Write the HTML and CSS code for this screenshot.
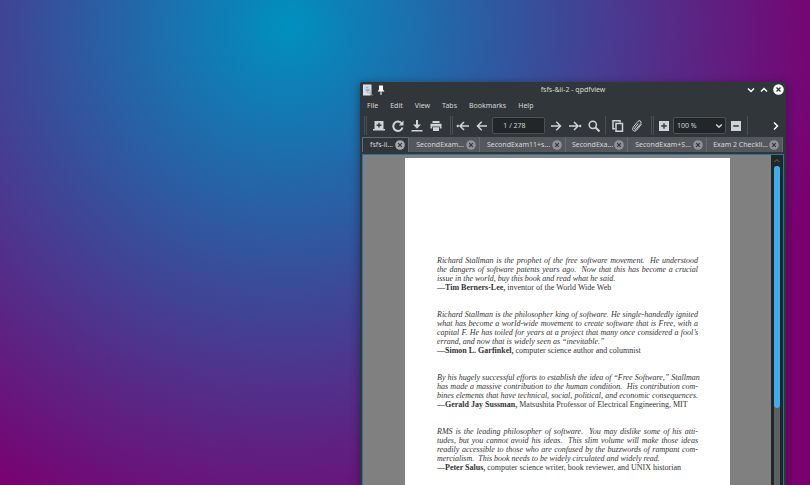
FILE: index.html
```html
<!DOCTYPE html>
<html lang="en">
<head>
<meta charset="utf-8">
<title>fsfs-&amp;ii-2 - qpdfview</title>
<link rel="stylesheet" href="styles.css">
</head>
<body>
<svg class="defs" aria-hidden="true">
  <symbol id="close" viewBox="0 0 10 10"><circle cx="5" cy="5" r="4.8" fill="currentColor"/><path class="cross" d="M3.2 3.2l3.6 3.6M6.8 3.2L3.2 6.8"/></symbol>
</svg>
<main class="window">
  <header class="titlebar">
    <div class="title-left">
      <svg width="11" height="12" viewBox="0 0 11 12"><path d="M1 .5h8.500v9l-1 2H1z" fill="#dfe3e6"/><path d="M2.500 2h5.500v6.500H2.500z" fill="#c3d4e4"/><path d="M4 3h2v1H4zM4 5h3v2H4z" fill="#8fb2d4"/><circle cx="7" cy="7.500" r="1.800" fill="none" stroke="#a5adb3" stroke-width=".8"/><path d="M8.500 9l2 2.500" stroke="#8a9298" stroke-width="1.200"/></svg>
      <svg width="8" height="10" viewBox="0 0 8 10"><path d="M2 .5h4v4l1.500 2h-7l1.500-2z" fill="#fcfcfc"/><path d="M4 6v4" stroke="#fcfcfc"/></svg>
    </div>
    <h1>fsfs-&amp;ii-2 - qpdfview</h1>
    <div class="title-right">
      <button aria-label="Minimize"><svg width="8" height="8" viewBox="0 0 8 8"><path class="line" d="M1 2.500l3 3 3-3"/></svg></button>
      <button aria-label="Maximize"><svg width="8" height="8" viewBox="0 0 8 8"><path class="line" d="M1 5.500l3-3 3 3"/></svg></button>
      <button class="win-close" aria-label="Close"><svg width="11" height="11"><use href="#close"/></svg></button>
    </div>
  </header>
  <nav class="menu">
    <button>File</button><button>Edit</button><button>View</button><button>Tabs</button><button>Bookmarks</button><button>Help</button>
  </nav>
  <div class="toolbar" role="toolbar" aria-label="Main">
    <span class="handle"></span>
    <div class="group">
      <button aria-label="Open"><svg width="12" height="12" viewBox="0 0 12 12"><path fill-rule="evenodd" fill="currentColor" d="M1.500 1h9v8h-9zM5.300 2.800v1.700H3.600v1.400h1.700v1.700h1.400V5.900h1.700V4.500H6.700V2.800z"/><path d="M0 9h12v1.500H0z" fill="currentColor"/></svg></button>
      <button aria-label="Refresh"><svg width="12" height="12" viewBox="0 0 12 12"><path class="line thick" d="M9.800 3.500A4.700 4.700 0 1 0 10.500 7.500"/><path d="M11.500.5v5H6.800z" fill="currentColor"/></svg></button>
      <button aria-label="Save"><svg width="12" height="12" viewBox="0 0 12 12"><path d="M5 0h2v4.500h3L6 8.700 2 4.500h3zM.5 10h11v1.500H.5z" fill="currentColor"/></svg></button>
      <button aria-label="Print"><svg width="12" height="12" viewBox="0 0 12 12"><path d="M2.500 1h7v2h-7zM.5 3.800h11v4.700H9.800v-2H2.200v2H.5zM3 7.300h6v3.700H3z" fill="currentColor"/></svg></button>
    </div>
    <span class="handle"></span>
    <div class="group">
      <button aria-label="First page"><svg width="14" height="12" viewBox="0 0 14 12"><path class="line" d="M4 6h9M8 2L4 6l4 4"/><circle cx="1.800" cy="6" r="1.200" fill="currentColor"/></svg></button>
      <button aria-label="Previous page"><svg width="12" height="12" viewBox="0 0 12 12"><path class="line" d="M1.500 6h9.500M5.700 1.800L1.500 6l4.200 4.200"/></svg></button>
    </div>
    <input class="page-no" type="text" value="1 / 278" aria-label="Page">
    <div class="group">
      <button aria-label="Next page"><svg width="12" height="12" viewBox="0 0 12 12"><path class="line" d="M10.500 6H1M6.300 1.800L10.500 6l-4.200 4.200"/></svg></button>
      <button aria-label="Last page"><svg width="14" height="12" viewBox="0 0 14 12"><path class="line" d="M10 6H1M6 2l4 4-4 4"/><circle cx="12.200" cy="6" r="1.200" fill="currentColor"/></svg></button>
      <button aria-label="Search"><svg width="12" height="12" viewBox="0 0 12 12"><circle class="line" cx="4.800" cy="4.800" r="3.600"/><path class="line thick" d="M7.500 7.500l4 4"/></svg></button>
    </div>
    <span class="sep"></span>
    <div class="group">
      <button aria-label="Copy"><svg width="12" height="12" viewBox="0 0 12 12"><path class="line" d="M4 3.500h6.500v7.700H4zM3 8.800H1V.8h7v1.700"/></svg></button>
      <button aria-label="Attach"><svg width="12" height="12" viewBox="0 0 12 12"><path class="line thin" d="M7.300 3.500L3.800 8q-.5 1.200.5 1.500.7 0 1.200-.7l4.300-5.300q.8-1.700-.5-2.600-1.300-.7-2.500.6L2.200 7.200q-1.300 2.200.1 3.500 1.700 1.200 3.400-.6l4.800-6"/></svg></button>
    </div>
    <span class="handle"></span>
    <div class="group zoom">
      <button aria-label="Zoom in"><svg width="10" height="10" viewBox="0 0 10 10"><path fill="currentColor" fill-rule="evenodd" d="M0 0h10v10H0zM4.300 2.200v2.100H2.200v1.400h2.100v2.100h1.400V5.700h2.100V4.300H5.700V2.200z"/></svg></button>
      <div class="select">
        <select aria-label="Zoom"><option>100 %</option></select>
        <svg width="8" height="8" viewBox="0 0 8 8"><path class="line" d="M1.200 2.500L4 5.300l2.800-2.800"/></svg>
      </div>
      <button aria-label="Zoom out"><svg width="10" height="10" viewBox="0 0 10 10"><path fill="currentColor" fill-rule="evenodd" d="M0 0h10v10H0zM2.200 4.300v1.400h5.600V4.300z"/></svg></button>
    </div>
    <span class="sep"></span>
    <button class="more" aria-label="More tools"><svg width="8" height="10" viewBox="0 0 8 10"><path class="line bright" d="M2 1.500L5.500 5 2 8.500"/></svg></button>
  </div>
  <div class="tabs">
    <div class="tab active"><button class="label">fsfs-ii...</button><button class="x" aria-label="Close tab"><svg width="10" height="10"><use href="#close"/></svg></button></div>
    <div class="tab"><button class="label">SecondExam...</button><button class="x" aria-label="Close tab"><svg width="10" height="10"><use href="#close"/></svg></button></div>
    <div class="tab"><button class="label">SecondExam11+s...</button><button class="x" aria-label="Close tab"><svg width="10" height="10"><use href="#close"/></svg></button></div>
    <div class="tab"><button class="label">SecondExa...</button><button class="x" aria-label="Close tab"><svg width="10" height="10"><use href="#close"/></svg></button></div>
    <div class="tab"><button class="label">SecondExam+S...</button><button class="x" aria-label="Close tab"><svg width="10" height="10"><use href="#close"/></svg></button></div>
    <div class="tab"><button class="label">Exam 2 Checkli...</button><button class="x" aria-label="Close tab"><svg width="10" height="10"><use href="#close"/></svg></button></div>
  </div>
  <section class="viewer">
    <div class="canvas">
      <article class="page">
        <blockquote>
          <p><span>Richard Stallman is the prophet of the free software movement. &nbsp;He understood</span>
          <span>the dangers of software patents years ago. &nbsp;Now that this has become a crucial</span>
          <span class="end">issue in the world, buy this book and read what he said.</span></p>
          <footer>—<b>Tim Berners-Lee,</b> inventor of the World Wide Web</footer>
        </blockquote>
        <blockquote>
          <p><span>Richard Stallman is the philosopher king of software. He single-handedly ignited</span>
          <span>what has become a world-wide movement to create software that is Free, with a</span>
          <span>capital F. He has toiled for years at a project that many once considered a fool’s</span>
          <span class="end">errand, and now that is widely seen as “inevitable.”</span></p>
          <footer>—<b>Simon L. Garfinkel,</b> computer science author and columnist</footer>
        </blockquote>
        <blockquote>
          <p><span>By his hugely successful efforts to establish the idea of “Free Software,” Stallman</span>
          <span>has made a massive contribution to the human condition. &nbsp;His contribution com-</span>
          <span>bines elements that have technical, social, political, and economic consequences.</span></p>
          <footer>—<b>Gerald Jay Sussman,</b> Matsushita Professor of Electrical Engineering, MIT</footer>
        </blockquote>
        <blockquote>
          <p><span>RMS is the leading philosopher of software. &nbsp;You may dislike some of his atti-</span>
          <span>tudes, but you cannot avoid his ideas. &nbsp;This slim volume will make those ideas</span>
          <span>readily accessible to those who are confused by the buzzwords of rampant com-</span>
          <span class="end">mercialism. &nbsp;This book needs to be widely circulated and widely read.</span></p>
          <footer>—<b>Peter Salus,</b> computer science writer, book reviewer, and UNIX historian</footer>
        </blockquote>
      </article>
    </div>
    <div class="scrollbar">
      <svg width="8" height="11" viewBox="0 0 8 11"><path d="M1.500 7L4 4.500 6.500 7" fill="none" stroke="#686d71"/></svg>
      <div class="track"><div class="thumb"></div></div>
    </div>
  </section>
</main>
</body>
</html>
```
FILE: styles.css
```css
* { box-sizing: border-box; }

body {
  margin: 0;
  height: 100vh;
  overflow: hidden;
  position: relative;
  background: radial-gradient(circle 545px at 288px 26px, #0090bf, #7a0070);
  font: 7px/10px "Noto Sans", sans-serif;
  color: #d5d8da;
}

button, input, select {
  margin: 0;
  padding: 0;
  border: 0;
  background: none;
  color: inherit;
  font: inherit;
}

svg { display: block; flex: none; }
.defs { position: absolute; width: 0; height: 0; }
.cross { stroke: #31363b; stroke-width: 1.2; }
.line { fill: none; stroke: currentColor; stroke-width: 1.5; }
.thick { stroke-width: 2; }
.thin { stroke-width: 1; }
.bright { stroke: #fcfcfc; }

.window {
  position: absolute;
  inset: 82px 24px 0 360px;
  display: flex;
  flex-direction: column;
  padding: 0 2px;
  background: #31363b;
  border-radius: 2px 2px 0 0;
  box-shadow: 0 2px 8px rgba(20, 20, 30, .55);
}

.titlebar {
  display: grid;
  grid-template-columns: 1fr auto 1fr;
  align-items: center;
  height: 15px;
}
.titlebar h1 { margin: 0; font-size: 7px; font-weight: 400; }
.title-left, .title-right { display: flex; align-items: center; gap: 4px; }
.title-right { justify-content: flex-end; gap: 5px; color: #fcfcfc; }

.menu { display: flex; align-items: center; gap: 12px; height: 17px; padding: 0 5px; }

.toolbar { display: flex; align-items: center; height: 23px; padding-left: 2px; color: #d0d3d5; }
.group { display: flex; align-items: center; }
.group button { display: flex; align-items: center; justify-content: center; width: 19px; height: 19px; }
.handle { width: 3px; height: 19px; margin-right: 2px; border: solid #4a4f54; border-width: 0 1px; }
.group + .handle { margin: 0 0 0 5px; }
.sep { width: 1px; height: 19px; margin: 0 2px; background: #4a4f54; }
.page-no, .select {
  width: 53px;
  height: 17px;
  border: 1px solid #4d5257;
  border-radius: 2px;
  background: #232629;
}
.page-no { margin: 0 1px; padding-right: 8px; text-align: center; }
.select { display: flex; align-items: center; padding-right: 2px; }
.select select { flex: 1; min-width: 0; padding-left: 3px; appearance: none; }
.more { display: flex; justify-content: center; width: 16px; margin-left: auto; }

.tabs {
  display: grid;
  grid-template-columns: 47fr 71fr 86fr 62fr 79fr 76fr;
  height: 15px;
  margin-right: 1px;
}
.tab {
  display: flex;
  align-items: center;
  padding: 0 3px 0 5px;
  min-width: 0;
  background: #54585d;
  border: solid #666b70;
  border-width: 0 1px 0 0;
}
.tab.active { background: #31363b; border-width: 1px 1px 0; }
.tab.active .x { color: #a5a9ac; }
.label { flex: 1; min-width: 0; white-space: nowrap; }
.x { color: #8e9296; }

.viewer {
  display: flex;
  flex: 1;
  min-height: 0;
  margin-top: 2px;
  border: solid #2a759c;
  border-width: 1px 1px 0;
}
.canvas { flex: 1; min-width: 0; padding: 3px 41px 0 42px; background: #808080; overflow: hidden; }
.page {
  min-height: 100%;
  padding: 98px 32px 0;
  background: #fff;
  color: #333;
  font: 8px/9px "Liberation Serif", serif;
}
blockquote { margin: 0 0 18px; white-space: nowrap; }
blockquote p { margin: 0; font-style: italic; }
blockquote span { display: block; text-align: justify; text-align-last: justify; }
blockquote .end { text-align-last: left; }

.scrollbar { display: flex; flex-direction: column; align-items: center; width: 12px; background: #232629; }
.track { flex: 1; width: 6px; border-radius: 3px 3px 0 0; background: #5c6165; }
.thumb { height: 76%; border-radius: 3px; background: #3daee9; }
```
